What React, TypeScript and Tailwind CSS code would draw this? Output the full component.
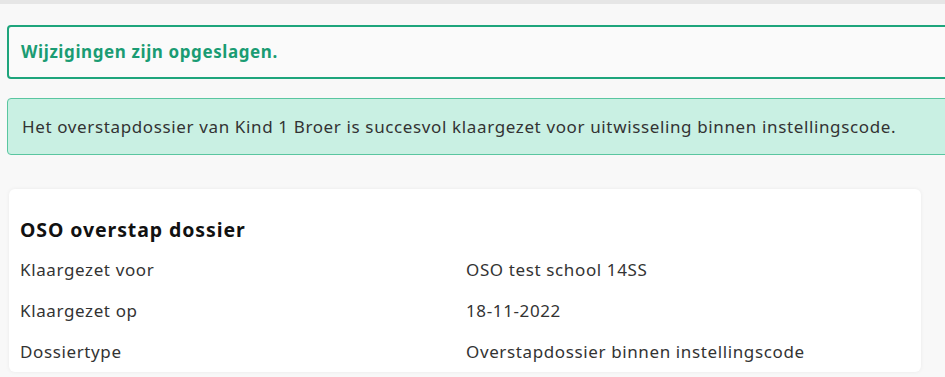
export default function App() {
  const rows = [
    ["Klaargezet voor", "OSO test school 14SS"],
    ["Klaargezet op", "18-11-2022"],
    ["Dossiertype", "Overstapdossier binnen instellingscode"],
  ];

  return (
    <div
      className="h-[377px] w-[945px] overflow-hidden bg-[#f8f8f8]"
      style={{ fontFamily: "'Noto Sans', sans-serif" }}
    >
      {/* top strip */}
      <div className="h-[4px] w-full bg-[#e6e6e6]" />

      <div className="w-[980px] pl-[7px] pt-[21px]">
        {/* saved message */}
        <div className="flex h-[54px] items-center rounded-[4px] border-2 border-[#1ea57c] bg-[#fafafa] pl-[12px]">
          <span className="text-[17px] font-bold tracking-[0.6px] text-[#1a9c73]">Wijzigingen zijn opgeslagen.</span>
        </div>

        {/* info message */}
        <div className="mt-[19px] flex h-[57px] items-center rounded-[4px] border-[1.5px] border-[#5ac6a0] bg-[#c9f0e3] pl-[14px]">
          <span className="text-[17px] tracking-[0.63px] text-[#333333]">
            Het overstapdossier van Kind 1 Broer is succesvol klaargezet voor uitwisseling binnen instellingscode.
          </span>
        </div>
      </div>

      {/* dossier card */}
      <div className="ml-[9px] mt-[34px] w-[912px] rounded-[6px] bg-white px-[11px] pt-[27px] shadow-[0_0_4px_rgba(0,0,0,0.06)]">
        <h2 className="mb-[5px] text-[19.5px] font-bold leading-[28px] tracking-[0.9px] text-[#111111]">OSO overstap dossier</h2>
        <div className="flex flex-col">
          {rows.map(([label, value]) => (
            <div key={label} className="flex h-[41px] items-center text-[17px] tracking-[0.62px] text-[#333333]">
              <div className="w-[446px]">{label}</div>
              <div>{value}</div>
            </div>
          ))}
        </div>
      </div>
    </div>
  );
}
